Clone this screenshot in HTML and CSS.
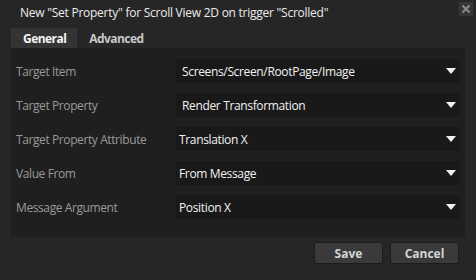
FILE: index.html
```html
<!DOCTYPE html>
<html>

<head>
    <title>Set Property</title>
    <meta charset="utf-8">
    <link rel="stylesheet" href="styles.css">
</head>

<body>

    <header class="titel">
        <h1>New "Set Property" for Scroll View 2D on trigger "Scrolled"</h1>
        <div class="luk">
            <svg width="10" height="10" viewBox="0 0 10 10">
                <path d="M1.5 1.5 L8.5 8.5 M8.5 1.5 L1.5 8.5" stroke="#8a8a8a" stroke-width="2" />
            </svg>
        </div>
    </header>

    <nav class="faner">
        <button class="fane valgt">General</button>
        <button class="fane">Advanced</button>
    </nav>

    <section class="panel">
        <div class="raekke">
            <label>Target Item</label>
            <div class="vaelger indryk"><span>Screens/Screen/RootPage/Image</span><i class="pil"></i></div>
        </div>
        <div class="raekke">
            <label>Target Property</label>
            <div class="vaelger indryk"><span>Render Transformation</span><i class="pil"></i></div>
        </div>
        <div class="raekke">
            <label>Target Property Attribute</label>
            <div class="vaelger"><span>Translation X</span><i class="pil"></i></div>
        </div>
        <div class="raekke">
            <label>Value From</label>
            <div class="vaelger"><span>From Message</span><i class="pil"></i></div>
        </div>
        <div class="raekke">
            <label>Message Argument</label>
            <div class="vaelger"><span>Position X</span><i class="pil"></i></div>
        </div>
    </section>

    <footer class="knapper">
        <button class="knap">Save</button>
        <button class="knap">Cancel</button>
    </footer>

</body>

</html>
```

FILE: styles.css
```css
html,
body {
    margin: 0;
    padding: 0;
    background-color: #262626;
    font-family: 'Open Sans', 'Noto Sans', sans-serif;
    font-size: 12px;
}

button {
    font-family: inherit;
}

.titel {
    display: flex;
    align-items: flex-start;
    height: 28px;
}

h1 {
    flex: 1;
    margin: 0;
    padding: 4px 0 0 20px;
    font-size: 12px;
    font-weight: normal;
    color: #ececec;
    letter-spacing: -0.25px;
}

.luk {
    flex: none;
    width: 14px;
    height: 14px;
    margin: 2px 3px 0 0;
    background-color: #363636;
    display: flex;
    align-items: center;
    justify-content: center;
}

.faner {
    display: flex;
    padding-left: 11px;
    height: 20px;
}

.fane {
    border: none;
    background-color: transparent;
    color: #c8c8c8;
    font-weight: bold;
    font-size: 12px;
    padding: 0 11px 0 12px;
    height: 20px;
    letter-spacing: -0.55px;
}

.valgt {
    background-color: #343434;
    color: #f4f4f4;
}

.panel {
    margin: 0 11px 0 11px;
    background-color: #1f1f1f;
    padding: 11px 5px 18px 5px;
    display: grid;
    grid-gap: 10px;
}

.raekke {
    display: grid;
    grid-template-columns: 160px 1fr;
    height: 24px;
    align-items: center;
}

label {
    color: #9a9a9a;
    letter-spacing: -0.4px;
}

.vaelger {
    height: 24px;
    background-color: #191919;
    display: flex;
    align-items: center;
    justify-content: space-between;
    padding: 0 3px 0 3px;
    color: #f2f2f2;
    letter-spacing: -0.35px;
}

.indryk {
    padding-left: 6px;
}

.pil {
    width: 0;
    height: 0;
    border-left: 5px solid transparent;
    border-right: 5px solid transparent;
    border-top: 6px solid #f0f0f0;
    margin-right: 1px;
}

.knapper {
    display: flex;
    justify-content: flex-end;
    gap: 7px;
    padding: 5px 17px 0 0;
}

.knap {
    width: 69px;
    height: 22px;
    background-color: #3a3a3a;
    border: 1px solid #1c1c1c;
    border-radius: 2px;
    color: #d4d4d4;
    font-size: 12px;
    font-weight: bold;
    padding: 0;
}
```
